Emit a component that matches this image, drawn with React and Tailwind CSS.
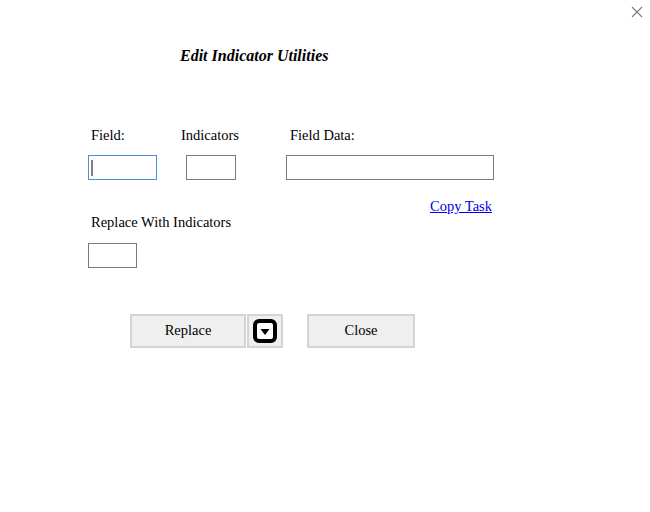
import React from "react";

export default function App() {
  return (
    <div className="relative w-[650px] h-[512px] bg-white text-black font-['Liberation_Serif','Times_New_Roman',serif]">
      <button className="absolute right-[7px] top-[6px] w-[12px] h-[12px] flex items-center justify-center" aria-label="close">
        <svg width="12" height="12" viewBox="0 0 12 12">
          <path d="M1 1 L11 11 M11 1 L1 11" stroke="#7a7a7a" strokeWidth="1.1" />
        </svg>
      </button>

      <div className="pt-[47px] pl-[180px] text-[16px] leading-[18px] font-bold italic">
        Edit Indicator Utilities
      </div>

      <div className="mt-[61px] pl-[91px] flex text-[14.5px] leading-[18px]">
        <span className="w-[90px]">Field:</span>
        <span className="w-[109px]">Indicators</span>
        <span>Field Data:</span>
      </div>

      <div className="mt-[11px] pl-[88px] flex">
        <div className="w-[69px] h-[25px] border border-[#4a8fd9] flex items-center pl-[2px]">
          <div className="w-[2px] h-[16px] bg-[#808080]" />
        </div>
        <div className="ml-[29px] w-[50px] h-[25px] border border-[#7a7a7a]" />
        <div className="ml-[50px] w-[208px] h-[25px] border border-[#7a7a7a]" />
      </div>

      <div className="mt-[19px] pl-[88px] w-[494px] h-[14px] flex items-center justify-end text-[14.5px] leading-[14px]">
        <a href="#" className="text-[#0000ee] underline pr-[2px]">Copy Task</a>
      </div>

      <div className="pl-[91px] text-[14.5px] leading-[18px]">
        Replace With Indicators
      </div>

      <div className="mt-[12px] pl-[88px]">
        <div className="w-[49px] h-[25px] border border-[#7a7a7a]" />
      </div>

      <div className="mt-[46px] pl-[130px] flex text-[14.5px]">
        <button className="w-[116px] h-[34px] bg-[#efefef] border-2 border-[#d4d4d4] flex items-center justify-center">
          Replace
        </button>
        <button className="ml-[1px] w-[36px] h-[34px] bg-[#efefef] border-2 border-[#d4d4d4] flex items-center justify-center">
          <svg width="24" height="24" viewBox="0 0 24 24">
            <rect x="2" y="2" width="20" height="20" rx="4" fill="white" stroke="black" strokeWidth="4" />
            <path d="M7.5 10 L16.5 10 L12 16 Z" fill="black" />
          </svg>
        </button>
        <button className="ml-[24px] w-[108px] h-[34px] bg-[#efefef] border-2 border-[#d4d4d4] flex items-center justify-center">
          Close
        </button>
      </div>
    </div>
  );
}
